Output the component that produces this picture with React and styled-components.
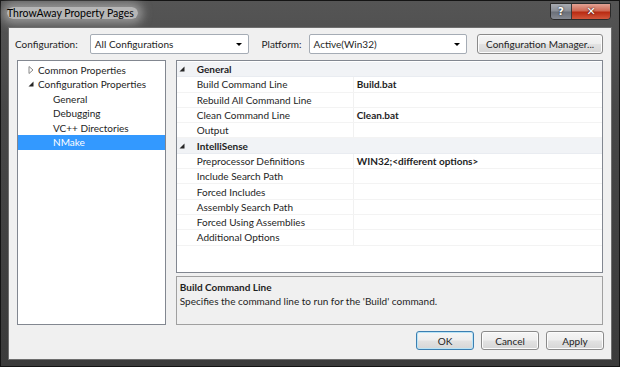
import React from 'react';
import styled, { createGlobalStyle } from 'styled-components';

const GlobalStyle = createGlobalStyle`
  html, body {
    margin: 0;
    padding: 0;
    background: #1b1b1b;
  }
  body {
    font-family: Lato, "Noto Sans", sans-serif;
    font-size: 10px;
    color: #000;
  }
`;

const Window = styled.div`
  width: 620px;
  height: 367px;
  box-sizing: border-box;
  display: flex;
  flex-direction: column;
  border: 1px solid #141414;
  padding: 0 7px 6px 7px;
  background: linear-gradient(180deg, #555 0%, #474747 30%, #3b3b3b 100%);
`;

const TitleBar = styled.div`
  height: 26px;
  display: flex;
  align-items: flex-start;
  justify-content: space-between;
`;

const Title = styled.span`
  margin: 6px 0 0 -1px;
  padding: 0 4px 0 0;
  font-size: 10.5px;
  color: #000;
  border-radius: 8px;
  background: rgba(215, 215, 215, 0.75);
  box-shadow: 0 0 10px 5px rgba(200, 200, 200, 0.55);
`;

const CaptionButtons = styled.div`
  display: flex;
  margin: 2px 1px 0 0;
  border: 1px solid #2a2a2a;
  border-radius: 0 0 4px 4px;
  overflow: hidden;
`;

const CaptionButton = styled.div`
  width: ${(p) => p.$w}px;
  height: 15px;
  display: flex;
  align-items: center;
  justify-content: center;
  color: #fff;
  font-weight: 700;
  font-size: ${(p) => (p.$close ? 11 : 10)}px;
  font-family: "DejaVu Sans", sans-serif;
  text-shadow: 0 0 2px #000;
  background: ${(p) =>
    p.$close
      ? 'linear-gradient(180deg, #e3a294 0%, #cf6a55 45%, #b92b12 55%, #d2573b 100%)'
      : 'linear-gradient(180deg, #a9acb2 0%, #8a8e96 45%, #6b7079 55%, #868a92 100%)'};
  border-left: ${(p) => (p.$close ? '1px solid #3a3a3a' : 'none')};
`;

const Client = styled.div`
  flex: 1;
  display: flex;
  flex-direction: column;
  background: #f0f0f0;
  border: 1px solid #6e6e6e;
  padding: 6px 8px 0 6px;
`;

const TopRow = styled.div`
  height: 20px;
  display: flex;
  align-items: center;
`;

const Label = styled.span`
  width: ${(p) => p.$w}px;
  margin-left: ${(p) => p.$ml || 0}px;
  color: #1e1e1e;
`;

const Combo = styled.div`
  width: 159px;
  height: 20px;
  box-sizing: border-box;
  display: flex;
  align-items: center;
  justify-content: space-between;
  padding: 0 6px 0 4px;
  background: #fff;
  border: 1px solid #a5acb5;
  border-radius: 2px;
  color: #1e1e1e;
`;

const ComboArrow = styled.span`
  width: 0;
  height: 0;
  border-left: 3px solid transparent;
  border-right: 3px solid transparent;
  border-top: 3px solid #000;
  margin-top: 1px;
`;

const Button = styled.div`
  width: ${(p) => p.$w}px;
  height: ${(p) => p.$h || 19}px;
  box-sizing: border-box;
  display: flex;
  align-items: center;
  justify-content: center;
  margin-left: ${(p) => p.$ml || 0}px;
  border: 1px solid ${(p) => (p.$default ? '#3c7fb1' : '#8a8a8a')};
  border-radius: 3px;
  background: linear-gradient(180deg, #f6f6f6 0%, #eeeeee 48%, #e2e2e2 52%, #d6d6d6 100%);
  box-shadow: inset 0 0 0 1px ${(p) => (p.$default ? '#b9e4f7' : '#fcfcfc')};
  color: #1e1e1e;
`;

const Main = styled.div`
  display: flex;
  margin: 6px 0 0 2px;
  height: 265px;
  gap: 10px;
`;

const Tree = styled.div`
  width: 149px;
  box-sizing: border-box;
  border: 1px solid #828790;
  background: #fff;
  padding-top: 1.5px;
`;

const TreeRow = styled.div`
  height: 14.5px;
  display: flex;
  align-items: center;
  padding-left: ${(p) => p.$indent}px;
  background: ${(p) => (p.$selected ? '#3399ff' : 'transparent')};
  color: ${(p) => (p.$selected ? '#fff' : '#1e1e1e')};
  white-space: nowrap;
`;

const Expander = styled.span`
  width: 8px;
  margin-right: 3px;
  display: flex;
  justify-content: center;
  svg {
    display: block;
  }
`;

const RightColumn = styled.div`
  width: 428px;
  display: flex;
  flex-direction: column;
  gap: 3px;
`;

const Grid = styled.div`
  height: 213px;
  box-sizing: border-box;
  border: 1px solid #828790;
  background: #fff;
  padding-top: 1px;
`;

const GridRow = styled.div`
  height: 15.3px;
  box-sizing: border-box;
  display: grid;
  grid-template-columns: 14px 162px 1fr;
  align-items: center;
  background: ${(p) => (p.$category ? '#f1f3f6' : '#fff')};
  border-bottom: 1px solid ${(p) => (p.$category ? '#e9ecf1' : '#f3f3f3')};
  white-space: nowrap;
  color: #1e1e1e;
`;

const GridGutter = styled.span`
  display: flex;
  justify-content: center;
  height: 100%;
  align-items: center;
  padding-right: 3px;
`;

const GridName = styled.span`
  padding-left: 6px;
  font-weight: ${(p) => (p.$bold ? 700 : 400)};
  grid-column: ${(p) => (p.$span ? '2 / 4' : 'auto')};
`;

const GridValue = styled.span`
  height: 100%;
  display: flex;
  align-items: center;
  padding-left: 3px;
  font-weight: 700;
  border-left: 1px solid #f1f1f1;
`;

const Description = styled.div`
  height: 49px;
  box-sizing: border-box;
  border: 1px solid #a0a0a0;
  background: #f0f0f0;
  padding: 3px 3px;
  color: #1e1e1e;
  line-height: 14px;
`;

const DescTitle = styled.div`
  font-weight: 700;
`;

const ButtonRow = styled.div`
  display: flex;
  justify-content: flex-end;
  margin: 6px -1px 0 0;
  gap: 7px;
`;

const ExpandedArrow = () => (
  <svg width="6" height="6" viewBox="0 0 6 6">
    <polygon points="5.5,0.5 5.5,5.5 0.5,5.5" fill="#262626" />
  </svg>
);

const CollapsedArrow = () => (
  <svg width="6" height="8" viewBox="0 0 6 8">
    <polygon points="1,0.5 5,4 1,7.5" fill="none" stroke="#888" strokeWidth="1" />
  </svg>
);

const treeItems = [
  { label: 'Common Properties', indent: 9, arrow: 'collapsed' },
  { label: 'Configuration Properties', indent: 9, arrow: 'expanded' },
  { label: 'General', indent: 35 },
  { label: 'Debugging', indent: 35 },
  { label: 'VC++ Directories', indent: 35 },
  { label: 'NMake', indent: 35, selected: true },
];

const gridRows = [
  { category: 'General' },
  { name: 'Build Command Line', value: 'Build.bat' },
  { name: 'Rebuild All Command Line', value: '' },
  { name: 'Clean Command Line', value: 'Clean.bat' },
  { name: 'Output', value: '' },
  { category: 'IntelliSense' },
  { name: 'Preprocessor Definitions', value: 'WIN32;<different options>' },
  { name: 'Include Search Path', value: '' },
  { name: 'Forced Includes', value: '' },
  { name: 'Assembly Search Path', value: '' },
  { name: 'Forced Using Assemblies', value: '' },
  { name: 'Additional Options', value: '' },
];

export default function App() {
  return (
    <>
      <GlobalStyle />
      <Window>
        <TitleBar>
          <Title>ThrowAway Property Pages</Title>
          <CaptionButtons>
            <CaptionButton $w={20}>?</CaptionButton>
            <CaptionButton $w={38} $close>✕</CaptionButton>
          </CaptionButtons>
        </TitleBar>
        <Client>
          <TopRow>
            <Label $w={75}>Configuration:</Label>
            <Combo>
              <span>All Configurations</span>
              <ComboArrow />
            </Combo>
            <Label $w={47} $ml={13}>Platform:</Label>
            <Combo>
              <span>Active(Win32)</span>
              <ComboArrow />
            </Combo>
            <Button $w={126} $h={20} $ml={10}>Configuration Manager...</Button>
          </TopRow>
          <Main>
            <Tree>
              {treeItems.map((item) => (
                <TreeRow key={item.label} $indent={item.indent} $selected={item.selected}>
                  {item.arrow && (
                    <Expander>
                      {item.arrow === 'expanded' ? <ExpandedArrow /> : <CollapsedArrow />}
                    </Expander>
                  )}
                  <span>{item.label}</span>
                </TreeRow>
              ))}
            </Tree>
            <RightColumn>
              <Grid>
                {gridRows.map((row) =>
                  row.category ? (
                    <GridRow key={row.category} $category>
                      <GridGutter>
                        <ExpandedArrow />
                      </GridGutter>
                      <GridName $bold $span>{row.category}</GridName>
                    </GridRow>
                  ) : (
                    <GridRow key={row.name}>
                      <GridGutter />
                      <GridName>{row.name}</GridName>
                      <GridValue>{row.value}</GridValue>
                    </GridRow>
                  )
                )}
              </Grid>
              <Description>
                <DescTitle>Build Command Line</DescTitle>
                <div>Specifies the command line to run for the 'Build' command.</div>
              </Description>
            </RightColumn>
          </Main>
          <ButtonRow>
            <Button $w={58} $default>OK</Button>
            <Button $w={58}>Cancel</Button>
            <Button $w={58}>Apply</Button>
          </ButtonRow>
        </Client>
      </Window>
    </>
  );
}
